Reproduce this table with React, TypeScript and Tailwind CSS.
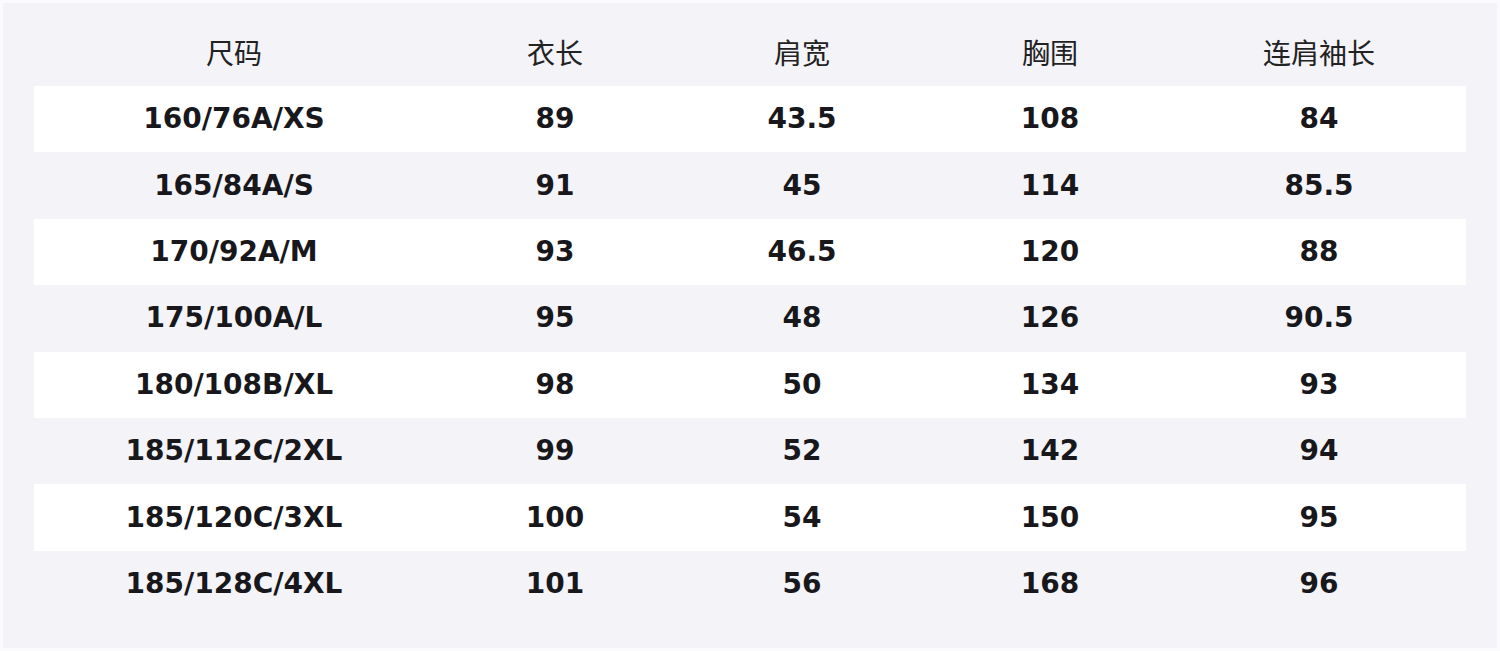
const headers = ['尺码', '衣长', '肩宽', '胸围', '连肩袖长'];

const rows: string[][] = [
  ['160/76A/XS', '89', '43.5', '108', '84'],
  ['165/84A/S', '91', '45', '114', '85.5'],
  ['170/92A/M', '93', '46.5', '120', '88'],
  ['175/100A/L', '95', '48', '126', '90.5'],
  ['180/108B/XL', '98', '50', '134', '93'],
  ['185/112C/2XL', '99', '52', '142', '94'],
  ['185/120C/3XL', '100', '54', '150', '95'],
  ['185/128C/4XL', '101', '56', '168', '96'],
];

const cols = 'grid grid-cols-[400px_242px_252px_244px_294px]';

export default function App() {
  return (
    <div className="h-[651px] w-[1500px] bg-[#fbfbfd] p-[3px]">
      <div className="h-[645px] w-[1494px] bg-[#f3f3f8] px-[31px]">
        <div
          className={`${cols} h-[83px] items-center pt-[15px] text-[28px] text-[#222]`}
          style={{ fontFamily: '"Noto Sans CJK SC", sans-serif' }}
        >
          {headers.map((h) => (
            <div key={h} className="text-center leading-none">
              {h}
            </div>
          ))}
        </div>
        {rows.map((r, i) => (
          <div
            key={r[0]}
            className={`${cols} h-[66.4px] items-center text-[28px] font-bold text-[#18181c] ${
              i % 2 === 0 ? 'bg-white' : ''
            }`}
            style={{ fontFamily: '"DejaVu Sans", sans-serif' }}
          >
            {r.map((c, j) => (
              <div key={j} className="text-center leading-none">
                {c}
              </div>
            ))}
          </div>
        ))}
      </div>
    </div>
  );
}
